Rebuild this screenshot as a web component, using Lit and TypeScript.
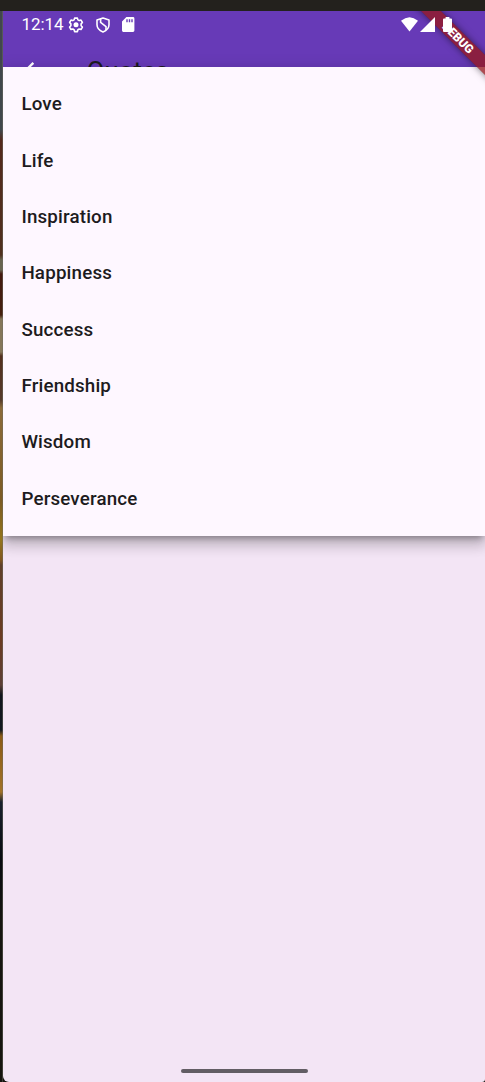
import { LitElement, html, css, svg } from "lit";
import { customElement } from "lit/decorators.js";

const CATEGORIES = ["Love", "Life", "Inspiration", "Happiness", "Success", "Friendship", "Wisdom", "Perseverance"];

const gear = svg`
  <path d="M6.6 1.1h2.8l.5 1.8 1.3.7 1.8-.5 1.4 2.4-1.3 1.4v1.8l1.3 1.3-1.4 2.5-1.8-.5-1.3.7-.5 1.9H6.6l-.5-1.9-1.3-.7-1.8.5L1.6 10l1.3-1.3V6.9L1.6 5.5 3 3.1l1.8.5 1.3-.7z" fill="none" stroke="#fff" stroke-width="1.6" stroke-linejoin="round"/>
  <circle cx="8" cy="7.8" r="2.5" fill="#fff"/>`;
const shield = svg`
  <path d="M7 1 13 3.1v4.7c0 3.3-2.5 5.8-6 7.1-3.5-1.3-6-3.8-6-7.1V3.1z" fill="none" stroke="#fff" stroke-width="1.6" stroke-linejoin="round"/>
  <path d="M4.6 2.1v3.3l5.4 4.2v3.4" fill="none" stroke="#fff" stroke-width="1.6"/>`;
const card = svg`
  <path fill-rule="evenodd" d="M4.4 0H11a1.4 1.4 0 0 1 1.4 1.4v12.2A1.4 1.4 0 0 1 11 15H1.4A1.4 1.4 0 0 1 0 13.6V4.4zM4.3 2.2v3h1.4v-3zm2.5 0v3h1.4v-3zm2.5 0v3h1.4v-3z" fill="#fff"/>`;

@customElement("app-bar")
class AppBar extends LitElement {
  static styles = css`
    :host { display: block; height: 100px; background: #673ab7; }
    .status { display: flex; height: 27px; padding-left: 18.5px; align-items: center; color: #fff; }
    .time { font-size: 17px; line-height: 27px; width: 46.9px; letter-spacing: -0.1px; white-space: nowrap; }
    .shield { margin-left: 11.3px; }
    .card { margin-left: 12.3px; }
    svg { display: block; flex: none; }
    .tools { display: flex; height: 66px; align-items: center; padding-left: 20px; }
    .title { margin-left: 44.8px; font-size: 25.8px; color: #1d1b20; position: relative; top: 0.4px; }
  `;
  render() {
    return html`
      <div class="status">
        <span class="time">12:14</span>
        <svg class="gear" width="16" height="16">${gear}</svg>
        <svg class="shield" width="14" height="16">${shield}</svg>
        <svg class="card" width="13" height="15">${card}</svg>
      </div>
      <div class="tools">
        <svg width="19" height="19"><path d="M19 8.3H4.5l6.7-6.6L9.5 0 0 9.5 9.5 19l1.7-1.7-6.7-6.6H19z" fill="#fff"/></svg>
        <span class="title">Quotes</span>
      </div>`;
  }
}

@customElement("category-menu")
class CategoryMenu extends LitElement {
  static styles = css`
    :host { display: block; box-sizing: border-box; height: 469px; padding: 9.1px 0; background: #fef7ff;
      box-shadow: 0 9px 12px 1px rgba(0,0,0,.14), 0 4px 16px 2px rgba(0,0,0,.12), 0 5px 6px -3px rgba(0,0,0,.3); }
    .item { height: 56.36px; display: flex; align-items: center; padding-left: 18.4px; font-size: 18.78px; font-weight: 500; letter-spacing: .17px; color: #1d1b20; }
  `;
  render() {
    return html`${CATEGORIES.map((c) => html`<div class="item">${c}</div>`)}`;
  }
}

@customElement("app-root")
class AppRoot extends LitElement {
  static styles = css`
    :host { display: block; height: 1082px; overflow: hidden; font-family: Roboto, sans-serif; }
    .desktop { box-sizing: border-box; height: 1082px; padding: 11px 0 0 3px;
      background: linear-gradient(#23211d 0 11px, transparent 11px),
        linear-gradient(90deg, transparent 2px, rgba(110,110,100,.45) 2px 3px, transparent 3px),
        linear-gradient(#41474c 0, #41474c 130px, #54291d 140px, #50301f 255px, #686450 260px 270px, #441a10 274px, #45200f 315px, #85765a 319px 352px, #54301f 356px, #563a2b 400px, #8c6a3a 408px, #7d5b24 500px, #94751c 540px, #81561f 560px, #60402a 565px, #6b3b22 640px, #5c3f36 685px, #11161d 695px, #12191f 730px, #8b5b16 736px, #a27228 792px, #18212d 802px, #080b10 860px, #151510 920px, #16150f 1082px); }
    .phone { height: 1071px; background: #f3e5f5; position: relative; overflow: hidden; border-radius: 0 0 3px 6px; display: flex; flex-direction: column; }
    app-bar { flex: none; }
    category-menu { position: absolute; top: 56px; left: 0; right: 0; }
    .handle { width: 127px; height: 4.5px; border-radius: 3px; background: #625d64; margin: auto 0 9px 177.5px; }
    .banner { position: absolute; left: 364.5px; top: 20px; width: 180px; height: 14px; transform: rotate(45deg);
      background: rgba(150,24,30,.77); box-shadow: 0 0 7px rgba(0,0,0,.5); color: #fff; font-size: 12px; line-height: 14px; font-weight: 900; text-align: center; z-index: 1; }
    .indicators { position: absolute; right: 33px; top: 6px; z-index: 2; display: flex; }
    .signal { margin: 0 8px 0 2px; }
  `;
  render() {
    return html`
      <div class="desktop">
        <div class="phone">
          <app-bar></app-bar>
          <category-menu></category-menu>
          <div class="banner">DEBUG</div>
          <div class="indicators">
            <svg width="17" height="15"><path d="M0 3.8Q8.5-3.4 17 3.8L8.5 14.5z" fill="#fff"/></svg>
            <svg class="signal" width="15" height="15"><path d="M15 0v15H0z" fill="#fff"/></svg>
            <svg width="9" height="15"><path d="M2.6 0h3.8v1.6H8a1 1 0 0 1 1 1V14a1 1 0 0 1-1 1H1a1 1 0 0 1-1-1V2.6a1 1 0 0 1 1-1h1.6z" fill="#fff"/></svg>
          </div>
          <div class="handle"></div>
        </div>
      </div>`;
  }
}
